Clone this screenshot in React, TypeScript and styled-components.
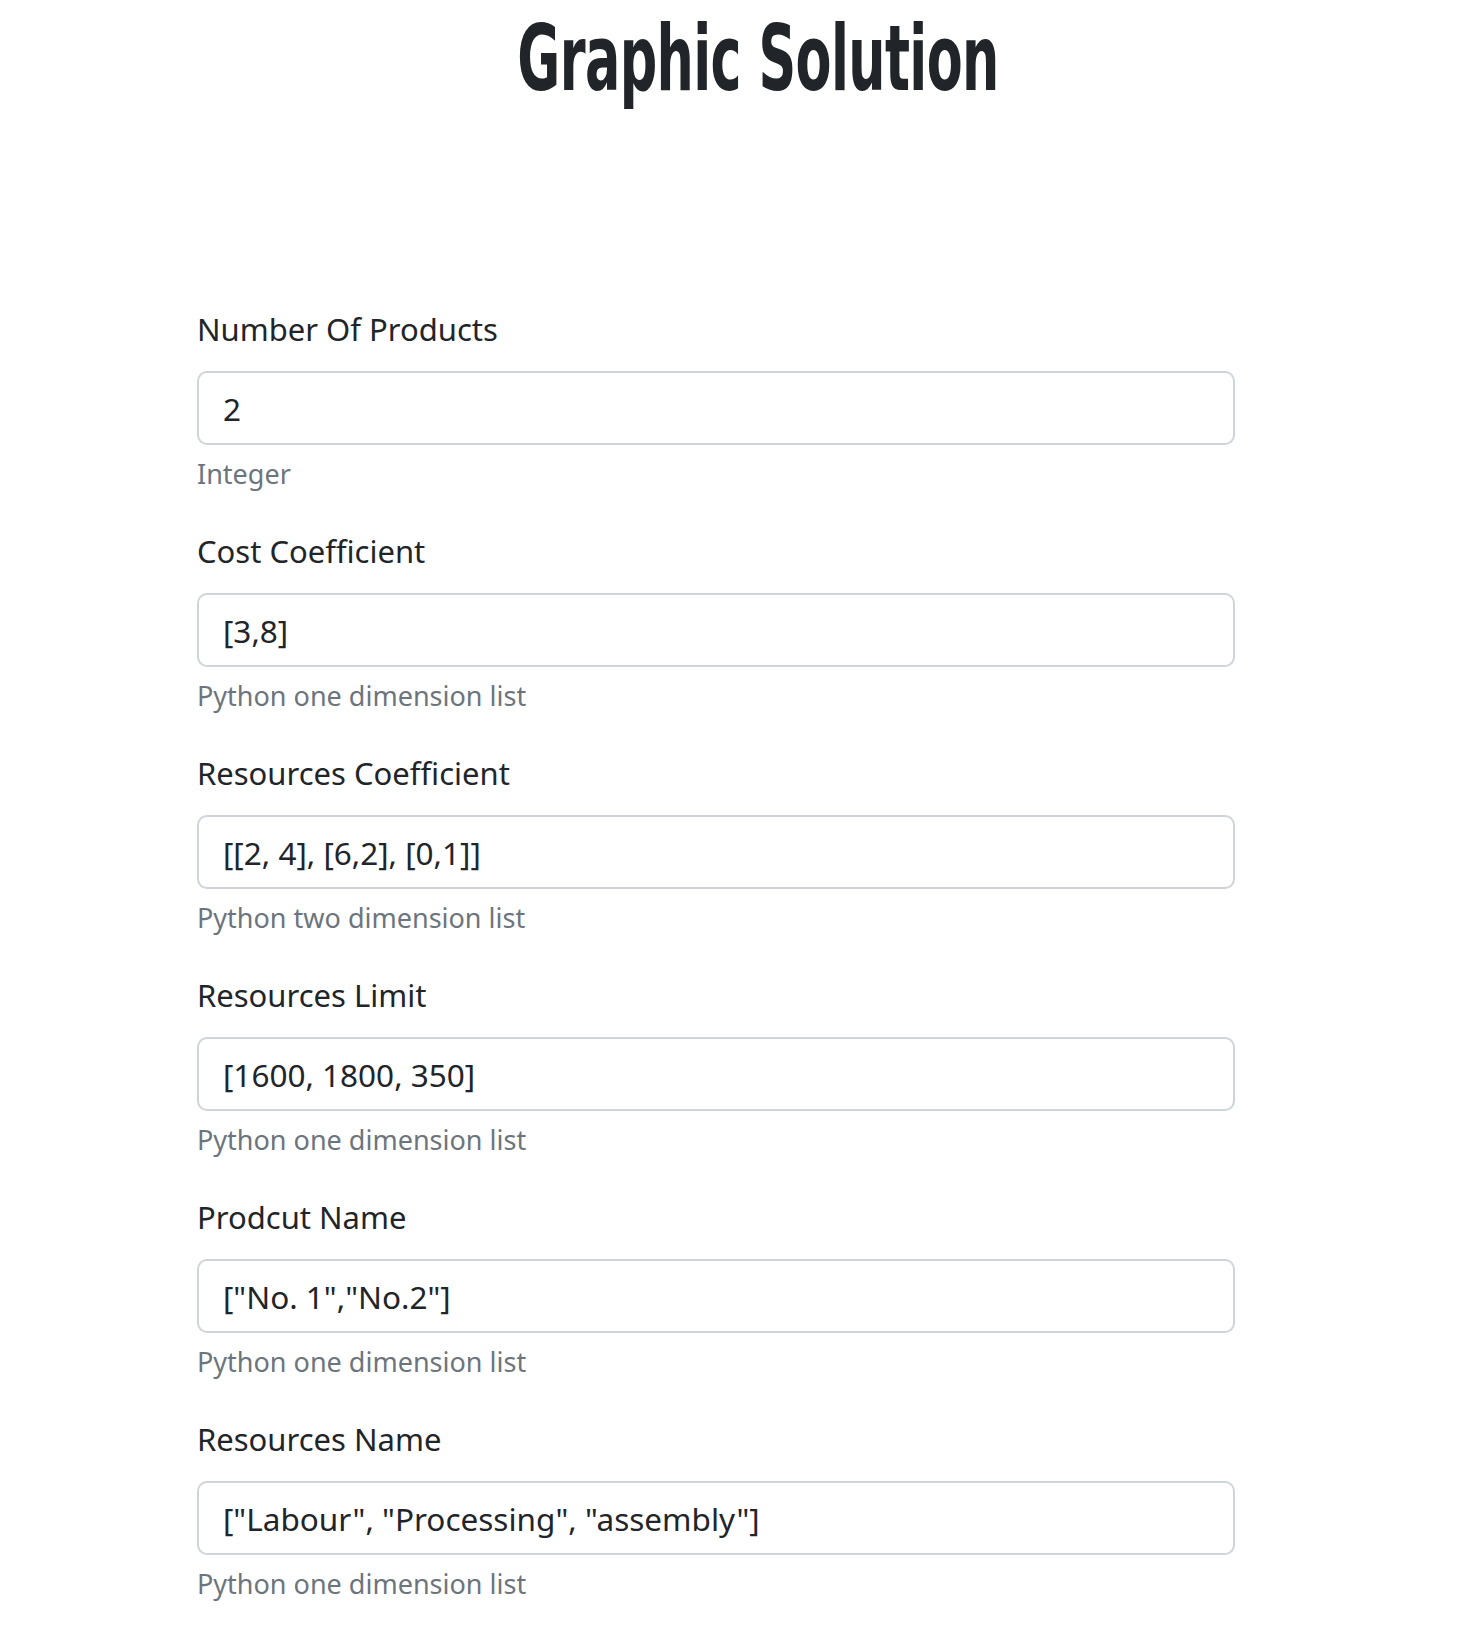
import React from "react";
import styled, { createGlobalStyle } from "styled-components";

const GlobalStyle = createGlobalStyle`
  html, body { margin: 0; padding: 0; background: #ffffff; }
  body { font-family: "Noto Sans", "Open Sans", sans-serif; color: #212529; }
  * { box-sizing: border-box; }
`;

const Page = styled.div`
  width: 1480px;
  min-height: 1628px;
  display: flex;
  flex-direction: column;
  overflow: hidden;
`;

const Title = styled.h1`
  margin: 13px 0 0 0;
  padding-left: 36px;
  text-align: center;
  font-family: "Liberation Sans Narrow", "DejaVu Sans Condensed", "Liberation Sans", sans-serif;
  font-stretch: condensed;
  font-weight: 700;
  font-size: 91px;
  line-height: 1;
  color: #212529;
  letter-spacing: -1px;
`;

const TitleText = styled.span`
  display: inline-block;
  transform: scaleX(0.64);
  transform-origin: center;
`;

const Form = styled.form`
  width: 1038px;
  margin: 201px 0 0 197px;
  display: flex;
  flex-direction: column;
  gap: 32px;
`;

const Group = styled.div`
  display: flex;
  flex-direction: column;
`;

const Label = styled.label`
  font-family: "Noto Sans", sans-serif;
  font-size: 31px;
  line-height: 48px;
  margin-bottom: 18px;
  color: #212529;
`;

const Input = styled.input`
  width: 100%;
  height: 74px;
  padding: 11px 24px;
  border: 2px solid #ced4da;
  border-radius: 10px;
  font-family: "Noto Sans", sans-serif;
  font-size: 31.5px;
  line-height: 48px;
  color: #212529;
  background: #ffffff;
  outline: none;
`;

const Help = styled.div`
  margin-top: 8px;
  font-family: "Noto Sans", sans-serif;
  font-size: 27px;
  line-height: 42px;
  color: #6c757d;
`;

const fields = [
  { label: "Number Of Products", value: "2", help: "Integer" },
  { label: "Cost Coefficient", value: "[3,8]", help: "Python one dimension list" },
  { label: "Resources Coefficient", value: "[[2, 4], [6,2], [0,1]]", help: "Python two dimension list" },
  { label: "Resources Limit", value: "[1600, 1800, 350]", help: "Python one dimension list" },
  { label: "Prodcut Name", value: '["No. 1","No.2"]', help: "Python one dimension list" },
  { label: "Resources Name", value: '["Labour", "Processing", "assembly"]', help: "Python one dimension list" },
];

export default function App() {
  return (
    <>
      <GlobalStyle />
      <Page>
        <Title>
          <TitleText>Graphic Solution</TitleText>
        </Title>
        <Form onSubmit={(e) => e.preventDefault()}>
          {fields.map((f, i) => (
            <Group key={i}>
              <Label htmlFor={`f${i}`}>{f.label}</Label>
              <Input id={`f${i}`} type="text" value={f.value} readOnly />
              <Help>{f.help}</Help>
            </Group>
          ))}
        </Form>
      </Page>
    </>
  );
}
